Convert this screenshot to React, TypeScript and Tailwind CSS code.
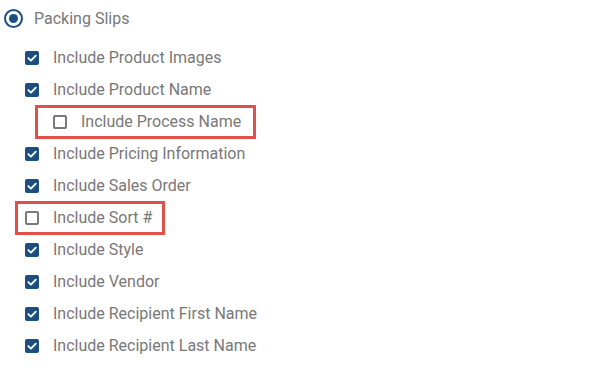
import React from "react";

const rows: { label: string; checked: boolean; mark?: "indent" | "flat" }[] = [
  { label: "Include Product Images", checked: true },
  { label: "Include Product Name", checked: true },
  { label: "Include Process Name", checked: false, mark: "indent" },
  { label: "Include Pricing Information", checked: true },
  { label: "Include Sales Order", checked: true },
  { label: "Include Sort #", checked: false, mark: "flat" },
  { label: "Include Style", checked: true },
  { label: "Include Vendor", checked: true },
  { label: "Include Recipient First Name", checked: true },
  { label: "Include Recipient Last Name", checked: true },
];

function Box({ checked }: { checked: boolean }) {
  if (!checked) {
    return <span className="block h-[14px] w-[14px] shrink-0 rounded-[2px] border-2 border-[#7a7a7a] bg-white" />;
  }
  return (
    <span className="flex h-[14px] w-[14px] shrink-0 items-center justify-center rounded-[2px] bg-[#1b4f80]">
      <svg viewBox="0 0 14 14" className="h-[14px] w-[14px]" fill="none">
        <path d="M3.3 7.2 5.9 9.6 10.8 4.6" stroke="#fff" strokeWidth="1.8" strokeLinecap="round" strokeLinejoin="round" />
      </svg>
    </span>
  );
}

export default function App() {
  return (
    <div className="h-[390px] w-[603px] bg-white text-[16px] text-[#787878]" style={{ fontFamily: "Roboto, 'Liberation Sans', sans-serif" }}>
      <div className="flex h-[35px] items-center gap-[11px] pl-[4px] pt-[2px]">
        <span className="flex h-[19px] w-[19px] items-center justify-center rounded-full border-[2.5px] border-[#1b4f80]">
          <span className="h-[9px] w-[9px] rounded-full bg-[#1b4f80]" />
        </span>
        <span>Packing Slips</span>
      </div>
      <div className="flex flex-col pt-[7px]">
        {rows.map((r) =>
          r.mark === "indent" ? (
            <div key={r.label} className="-my-px ml-[35px] flex h-[34px] w-[221px] items-center gap-[14px] border-[3px] border-[#e04f48] pl-[15px]">
              <Box checked={r.checked} />
              <span>{r.label}</span>
            </div>
          ) : r.mark === "flat" ? (
            <div key={r.label} className="-my-px ml-[15px] flex h-[34px] w-[150px] items-center gap-[14px] border-[3px] border-[#e04f48] pl-[7px]">
              <Box checked={r.checked} />
              <span>{r.label}</span>
            </div>
          ) : (
            <div key={r.label} className="flex h-[32px] items-center gap-[14px] pl-[25px]">
              <Box checked={r.checked} />
              <span>{r.label}</span>
            </div>
          )
        )}
      </div>
    </div>
  );
}
